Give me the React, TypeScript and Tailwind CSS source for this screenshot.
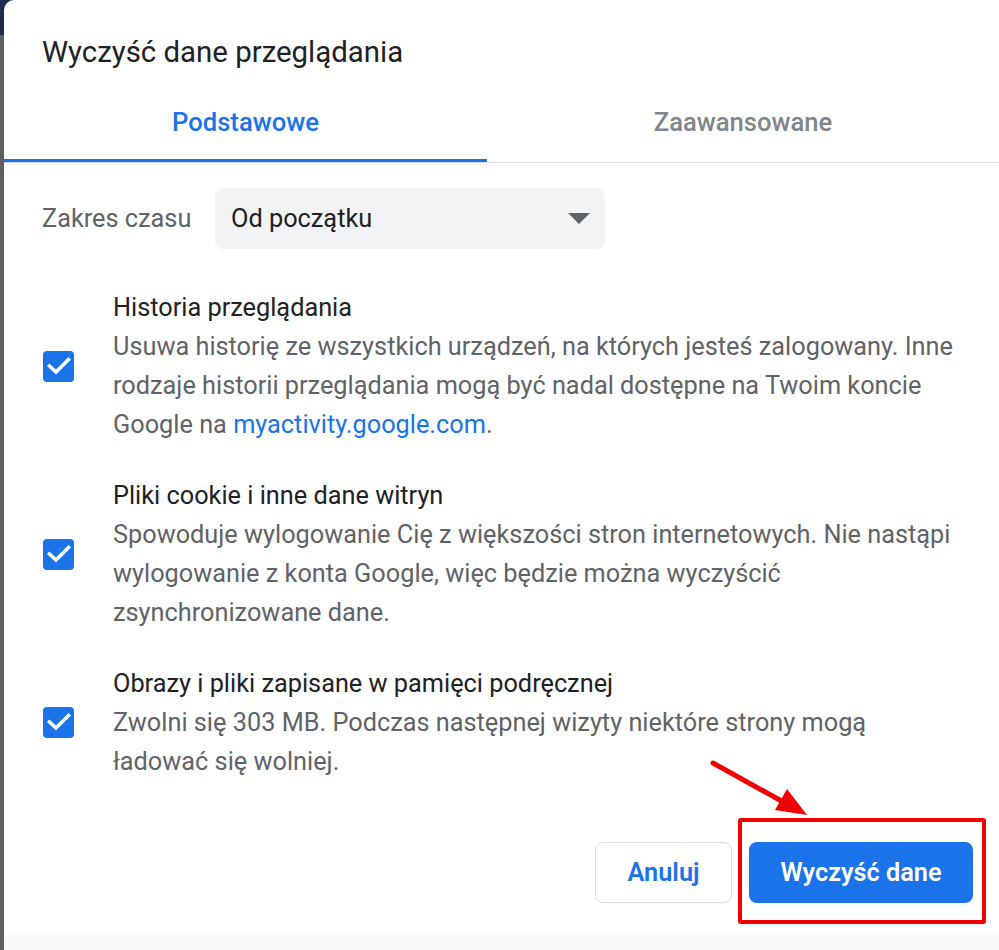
import React from "react";

const font = { fontFamily: "Roboto, 'Noto Sans', sans-serif" };

function Check() {
  return (
    <div className="w-[31px] h-[31px] rounded-[4px] bg-[#1a73e8] shrink-0">
      <svg width="31" height="31" viewBox="0 0 31 31" fill="none">
        <path d="M6.5 15l6.5 6L25.5 8.5" stroke="white" strokeWidth="3.6" strokeLinecap="square" />
      </svg>
    </div>
  );
}

function Section({ title, lines }: { title: string; lines: React.ReactNode[] }) {
  return (
    <div className="flex items-center">
      <div className="w-[109px] pl-[39px] flex">
        <Check />
      </div>
      <div className="flex flex-col text-[25.3px] leading-[39px]">
        <div className="text-[#202124] whitespace-nowrap">{title}</div>
        {lines.map((l, i) => (
          <div key={i} className="text-[#5f6368] whitespace-nowrap">
            {l}
          </div>
        ))}
      </div>
    </div>
  );
}

export default function App() {
  return (
    <div
      className="relative w-[999px] h-[950px] overflow-hidden bg-[linear-gradient(to_bottom,#1b2a4e_0px,#1b2a4e_35px,#5f6060_35px)] flex"
      style={font}
    >
      <div className="ml-[4px] flex-1 bg-white rounded-tl-[10px] flex flex-col">
        <div className="pt-[34px] pl-[38px] text-[29.4px] leading-[36px] text-[#202124]">
          Wyczyść dane przeglądania
        </div>
        <div className="mt-[16px] flex border-b border-[#dadce0]">
          <div className="w-[483px] flex flex-col">
            <div className="h-[73px] flex items-center justify-center text-[25.6px] font-medium text-[#1a73e8]">
              Podstawowe
            </div>
            <div className="h-[3px] bg-[#1a73e8]" />
          </div>
          <div className="flex-1 h-[76px] flex items-center justify-center pb-[3px] text-[25.6px] font-medium text-[#80868b]">
            Zaawansowane
          </div>
        </div>
        <div className="mt-[25px] flex items-center pl-[38px]">
          <div className="w-[173px] text-[25.3px] text-[#5f6368]">Zakres czasu</div>
          <div className="w-[390px] h-[61px] rounded-[8px] bg-[#f1f3f4] flex items-center justify-between pl-[16px] pr-[15px]">
            <span className="text-[25.3px] text-[#202124]">Od początku</span>
            <svg width="22" height="12" viewBox="0 0 22 12">
              <path d="M0 0h22L11 11z" fill="#5f6368" />
            </svg>
          </div>
        </div>
        <div className="mt-[39px] flex flex-col gap-[32px]">
          <Section
            title="Historia przeglądania"
            lines={[
              "Usuwa historię ze wszystkich urządzeń, na których jesteś zalogowany. Inne",
              "rodzaje historii przeglądania mogą być nadal dostępne na Twoim koncie",
              <>
                Google na <span className="text-[#1a73e8]">myactivity.google.com</span>
                <span className="text-[#5f6368]">.</span>
              </>,
            ]}
          />
          <Section
            title="Pliki cookie i inne dane witryn"
            lines={[
              "Spowoduje wylogowanie Cię z większości stron internetowych. Nie nastąpi",
              "wylogowanie z konta Google, więc będzie można wyczyścić",
              "zsynchronizowane dane.",
            ]}
          />
          <Section
            title="Obrazy i pliki zapisane w pamięci podręcznej"
            lines={[
              "Zwolni się 303 MB. Podczas następnej wizyty niektóre strony mogą",
              "ładować się wolniej.",
            ]}
          />
        </div>
        <div className="mt-[61px] flex justify-end gap-[17px] pr-[26px]">
          <button className="w-[137px] h-[61px] rounded-[8px] border border-[#dadce0] bg-white text-[#1a73e8] text-[25.3px] font-semibold">
            Anuluj
          </button>
          <button className="w-[224px] h-[61px] rounded-[8px] bg-[#1a73e8] text-white text-[25.3px] font-semibold">
            Wyczyść dane
          </button>
        </div>
        <div className="mt-auto h-[15px] bg-[#f8f9fa]" />
      </div>
      <div className="absolute left-[738px] top-[818px] w-[248px] h-[106px] border-[4px] border-[#f00000] rounded-[3px]" />
      <svg className="absolute left-0 top-0" width="999" height="950" viewBox="0 0 999 950">
        <line x1="713" y1="763" x2="785" y2="803" stroke="#f00000" strokeWidth="5" strokeLinecap="round" />
        <polygon points="807,815 775,810 787,789" fill="#f00000" />
      </svg>
    </div>
  );
}
